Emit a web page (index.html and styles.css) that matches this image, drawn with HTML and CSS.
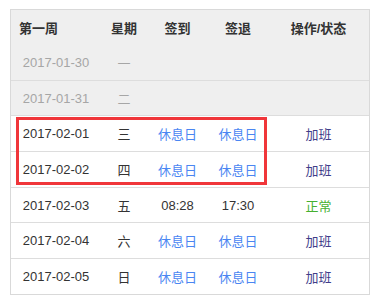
FILE: index.html
```html
<!DOCTYPE html>
<html>
<head>
<meta charset="utf-8">
<link rel="stylesheet" href="styles.css">
</head>
<body>
<div class="wrap">
  <div class="table">
    <div class="row head">
      <div class="c first">第一周</div>
      <div class="c">星期</div>
      <div class="c">签到</div>
      <div class="c">签退</div>
      <div class="c">操作/状态</div>
    </div>
    <div class="row past nolines">
      <div class="c">2017-01-30</div>
      <div class="c">一</div>
      <div class="c"></div>
      <div class="c"></div>
      <div class="c"></div>
    </div>
    <div class="row past">
      <div class="c">2017-01-31</div>
      <div class="c">二</div>
      <div class="c"></div>
      <div class="c"></div>
      <div class="c"></div>
    </div>
    <div class="row">
      <div class="c">2017-02-01</div>
      <div class="c">三</div>
      <div class="c rest">休息日</div>
      <div class="c rest">休息日</div>
      <div class="c ot">加班</div>
    </div>
    <div class="row">
      <div class="c">2017-02-02</div>
      <div class="c">四</div>
      <div class="c rest">休息日</div>
      <div class="c rest">休息日</div>
      <div class="c ot">加班</div>
    </div>
    <div class="row">
      <div class="c">2017-02-03</div>
      <div class="c">五</div>
      <div class="c">08:28</div>
      <div class="c">17:30</div>
      <div class="c ok">正常</div>
    </div>
    <div class="row">
      <div class="c">2017-02-04</div>
      <div class="c">六</div>
      <div class="c rest">休息日</div>
      <div class="c rest">休息日</div>
      <div class="c ot">加班</div>
    </div>
    <div class="row">
      <div class="c">2017-02-05</div>
      <div class="c">日</div>
      <div class="c rest">休息日</div>
      <div class="c rest">休息日</div>
      <div class="c ot">加班</div>
    </div>
    <div class="highlight"></div>
  </div>
</div>
</body>
</html>
```

FILE: styles.css
```css
html, body {
  margin: 0;
  padding: 0;
  background: #ffffff;
}
body {
  font-family: "Liberation Sans", Arial, "Noto Sans CJK SC", sans-serif;
  font-size: 13px;
  color: #333333;
}
.wrap {
  padding: 9px 11px 0 10px;
}
.table {
  position: relative;
  width: 360px;
  box-sizing: border-box;
  border: 1px solid #d9d9d9;
}
.row {
  display: grid;
  grid-template-columns: 90px 46px 61px 60px 101px;
  height: 35.7px;
  box-sizing: border-box;
  border-top: 1px solid #dddddd;
}
.row.head {
  height: 34px;
  border-top: 0;
  background: #efefef;
  font-weight: bold;
  color: #333333;
}
.row.past {
  background: #efefef;
  color: #a6a6a6;
}
.row.nolines {
  border-top-color: #efefef;
}
.c {
  display: flex;
  align-items: center;
  justify-content: center;
  white-space: nowrap;
}
.c.first {
  justify-content: flex-start;
  padding-left: 8px;
}
.rest {
  color: #4a86f2;
}
.ot {
  color: #3f3d8a;
}
.ok {
  color: #45b030;
}
.highlight {
  position: absolute;
  left: 5px;
  top: 107px;
  width: 251px;
  height: 68px;
  box-sizing: border-box;
  border: 3px solid #f0363a;
}
```
